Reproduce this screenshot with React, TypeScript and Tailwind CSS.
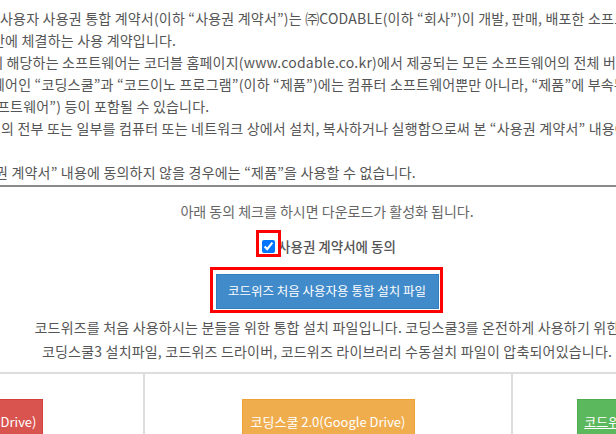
export default function App() {
  const terms = [
    { cls: "ml-0", text: "사용자 사용권 통합 계약서(이하 “사용권 계약서”)는 ㈜CODABLE(이하 “회사”)이 개발, 판매, 배포한 소프트웨어와 관련하여 귀하와 회사" },
    { cls: "-ml-[8px]", text: "간에 체결하는 사용 계약입니다." },
    { cls: "-ml-[10px]", text: "에 해당하는 소프트웨어는 코더블 홈페이지(www.codable.co.kr)에서 제공되는 모든 소프트웨어의 전체 버전을 포함합니다." },
    { cls: "-ml-[8px]", text: "웨어인 “코딩스쿨”과 “코드이노 프로그램”(이하 “제품”)에는 컴퓨터 소프트웨어뿐만 아니라, “제품”에 부속된 매체, 인쇄물" },
    { cls: "-ml-[3px]", text: "프트웨어”) 등이 포함될 수 있습니다." },
    { cls: "ml-[1px]", text: "의 전부 또는 일부를 컴퓨터 또는 네트워크 상에서 설치, 복사하거나 실행함으로써 본 “사용권 계약서” 내용에 동의하게 됩니다." },
    { cls: "ml-0", text: "\u00a0" },
    { cls: "-ml-[5px]", text: "권 계약서” 내용에 동의하지 않을 경우에는 “제품”을 사용할 수 없습니다." },
  ];

  return (
    <div
      className="w-[616px] h-[434px] overflow-hidden bg-white text-[#555]"
      style={{ fontFamily: '"Noto Sans CJK KR", "Noto Sans", sans-serif' }}
    >
      <div className="pt-[7px] pb-[2px] border-b-2 border-[#8a8a8a] whitespace-nowrap text-[14px] tracking-[0.2px] leading-[22px]">
        {terms.map((t, i) => (
          <div key={i} className={t.cls}>
            {t.text}
          </div>
        ))}
      </div>

      <div className="w-[1104px] -ml-[225px] flex flex-col items-center">
        <p className="mt-[14px] text-[14px] leading-[20px] text-[#666]">
          아래 동의 체크를 하시면 다운로드가 활성화 됩니다.
        </p>

        <label className="relative mt-[15px] flex items-center h-[20px] text-[13.5px] font-medium text-[#555]">
          <input type="checkbox" defaultChecked className="w-[13px] h-[13px] ml-[4px] mr-[3px] my-[3px]" />
          사용권 계약서에 동의
          <span className="absolute left-[-2px] top-[-6px] w-[25px] h-[27px] border-[3px] border-[#ff0000]" />
        </label>

        <div className="relative mt-[18px]">
          <button className="w-[223px] h-[35px] bg-[#428bca] border border-[#357ebd] text-white text-[12.5px]">
            코드위즈 처음 사용자용 통합 설치 파일
          </button>
          <span className="absolute -left-[6px] -right-[4px] -top-[7px] -bottom-[4px] border-[3px] border-[#ff0000]" />
        </div>

        <p className="mt-[6px] text-center text-[14px] tracking-[0.2px] leading-[24px] text-[#555] whitespace-nowrap">
          코드위즈를 처음 사용하시는 분들을 위한 통합 설치 파일입니다. 코딩스쿨3를 온전하게 사용하기 위한
          <br />
          코딩스쿨3 설치파일, 코드위즈 드라이버, 코드위즈 라이브러리 수동설치 파일이 압축되어있습니다.
        </p>

        <div className="mt-[9px] w-full border-t-2 border-[#dddddd] grid grid-cols-3">
          <div className="flex justify-center pt-[25px] pb-[20px]">
            <button className="w-[168px] h-[46px] bg-[#d9534f] border border-[#d43f3a] text-white text-[13px]">
              코딩스쿨 3.0(Google Drive)
            </button>
          </div>
          <div className="flex justify-center pt-[25px] pb-[20px] border-l-2 border-[#dddddd]">
            <button className="w-[173px] h-[46px] bg-[#f0ad4e] border border-[#eea236] text-white text-[13px]">
              코딩스쿨 2.0(Google Drive)
            </button>
          </div>
          <div className="flex justify-center pt-[25px] pb-[20px] border-l-2 border-[#dddddd]">
            <button className="w-[238px] h-[46px] bg-[#5cb85c] border border-[#4cae4c] text-white text-[13px] underline">
              코드위즈 라이브러리 설치(Google Drive)
            </button>
          </div>
        </div>
      </div>
    </div>
  );
}
